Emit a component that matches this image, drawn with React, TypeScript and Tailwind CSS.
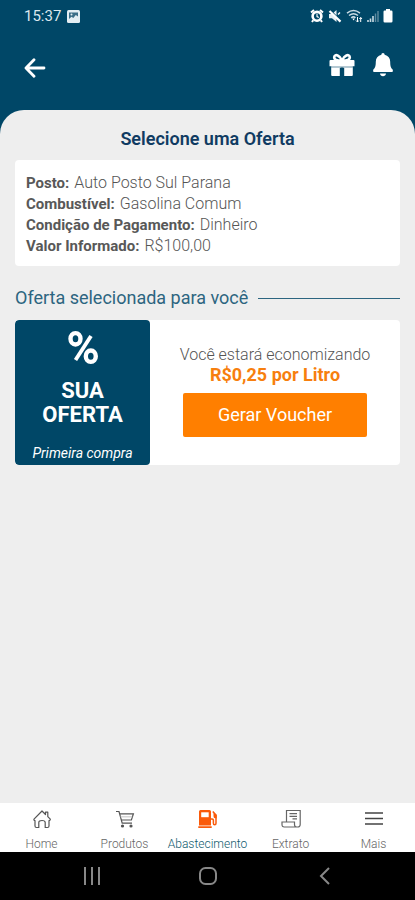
import React from "react";

const details = [
  { label: "Posto", value: "Auto Posto Sul Parana" },
  { label: "Combustível", value: "Gasolina Comum" },
  { label: "Condição de Pagamento", value: "Dinheiro" },
  { label: "Valor Informado", value: "R$100,00" },
];

const PictureIcn = () => (
  <svg width="13" height="13" viewBox="0 0 13 13" aria-hidden="true">
    <rect width="13" height="13" rx="1.5" fill="#e3edf2" />
    <path d="M2 2.5h9v4L8.800 5 6.300 8 4.500 6.800 2 9z" fill="#3b6d86" />
    <circle cx="4.500" cy="4.500" r="1" fill="#e3edf2" />
  </svg>
);

const AlarmIcn = () => (
  <svg width="14" height="14" viewBox="0 0 14 14" fill="none" aria-hidden="true">
    <path d="M1 3.6 4 1M13 3.6 10 1M3.2 11.2 2 13M10.8 11.2 12 13" stroke="#fff" strokeWidth="2" />
    <circle cx="7" cy="7.3" r="4.4" stroke="#fff" strokeWidth="2.6" />
    <path d="M7 4.8v2.8l1.8 1" stroke="#fff" strokeWidth="1.1" />
  </svg>
);

const MuteIcn = () => (
  <svg width="14" height="14" viewBox="0 0 14 14" aria-hidden="true">
    <path d="M1 5h3l4.5-4v12L4 9.300H1z" fill="#e6eff3" />
    <path d="m1 0 12 12" stroke="#004767" strokeWidth="1.500" />
    <path d="m1.500 2 11 10.600" stroke="#fff" strokeWidth="2.200" />
    <path d="M10 5.500 12 3.500" stroke="#fff" strokeWidth="1.200" />
  </svg>
);

const WifiIcn = () => (
  <svg width="17" height="14" viewBox="0 0 17 14" fill="none" aria-hidden="true">
    <path d="M1 4.2Q7.500-1 14 4.200M3 6.500Q7.500 3 12 6.500M5.200 8.800Q7.500 7 9.500 8.800" stroke="#c8dae3" strokeWidth="1.500" />
    <path d="m6.300 9.600 1.200 2 1.500-2z" fill="#fff" />
    <path d="M11.500 13V8m-1.500 3.500 1.500 1.500 1.300-1.500M14.700 13V8.500m-1.300 1.500 1.300-1.500L16 10" stroke="#fff" strokeWidth="1" />
  </svg>
);

const SignalIcn = () => (
  <svg width="12" height="14" viewBox="0 0 12 14" fill="none" aria-hidden="true">
    <path d="M1 13v-2M3.500 13V9.500M6 13V7" stroke="#c8dae3" strokeWidth="1.600" />
    <path d="M8.500 13V4.500M11 13V2" stroke="#5f8ba0" strokeWidth="1.400" />
  </svg>
);

const BatteryIcn = () => (
  <svg width="10" height="14" viewBox="0 0 10 14" fill="#fff" aria-hidden="true">
    <path d="M3 0h4v1.500h1.200q1.300 0 1.300 1.300v9.400q0 1.300-1.300 1.300H1.800Q.5 13.500.5 12.200V2.800q0-1.300 1.300-1.300H3z" />
  </svg>
);

const BackIcn = () => (
  <svg width="22" height="20" viewBox="0 0 22 20" fill="none" stroke="#fff" strokeWidth="2.800" strokeLinecap="round" strokeLinejoin="round" aria-hidden="true">
    <path d="M20 10H2.500M10 1.800 2 10l8 8.200" />
  </svg>
);

const GiftIcn = () => (
  <svg width="26" height="24" viewBox="0 0 26 24" aria-hidden="true">
    <path d="M13 7.500C11 2.500 5.800.2 5.200 4.200 5 7 8 7.500 13 7.500 18 7.500 21 7 20.800 4.200 20.200.2 15 2.500 13 7.500z" fill="none" stroke="#fff" strokeWidth="2.600" />
    <path d="M1.500 7h23q1 0 1 1v5.300H.5V8q0-1 1-1zM2.200 14.800h8.600V23H3.200q-1 0-1-1zM15.200 14.800h8.600V22q0 1-1 1h-7.600z" fill="#fff" />
    <path d="M2.200 13h21.600v2H2.200z" fill="#b4c8d2" />
    <path d="M11.500 14.500h3V23h-3z" fill="#004767" />
  </svg>
);

const BellIcn = () => (
  <svg width="20" height="24" viewBox="0 0 20 24" fill="#fff" aria-hidden="true">
    <path d="M10 0c1 0 1.600.7 1.600 1.800 3.600.9 5.600 3.400 5.600 7 0 4.700.8 6.200 2.200 7.500.7.700.8 2.700-.8 2.700H1.400c-1.600 0-1.500-2-.8-2.700C2 15 2.800 13.500 2.800 8.800c0-3.600 2-6.100 5.600-7C8.400.7 9 0 10 0zM7 20.500h6c-.2 1.700-1.400 2.800-3 2.800s-2.800-1.100-3-2.800z" />
  </svg>
);

const PercentIcn = () => (
  <svg width="32" height="35" viewBox="0 0 32 35" fill="none" stroke="#fff" aria-hidden="true">
    <ellipse cx="8.500" cy="8.800" rx="5" ry="5.700" strokeWidth="4.400" />
    <ellipse cx="23.800" cy="26.200" rx="5" ry="5.700" strokeWidth="4.400" />
    <path d="M24 6 8.500 30" strokeWidth="3.800" />
  </svg>
);

const HomeIcn = () => (
  <svg width="20" height="20" viewBox="0 0 20 20" fill="none" stroke="#555" strokeWidth="1.200" strokeLinejoin="round" aria-hidden="true">
    <path d="M2 10.200 10 2l3.500 3.500V3.200h2.300v4.500L18.300 10.200q.2 1.300-1.300 1.300v5.500q0 1.500-1.500 1.500h-2.300v-5q0-2-3.200-2t-3.200 2v5H4.500Q3 18.500 3 17v-5.500q-1.500 0-1-1.300z" />
  </svg>
);

const CartIcn = () => (
  <svg width="20" height="20" viewBox="0 0 20 20" fill="none" stroke="#555" strokeWidth="1.200" aria-hidden="true">
    <path d="M1 2.500h3l3.200 11.700H17M4.800 4.800h13.600l-2 6.200H6.500" />
    <path d="M5.600 7.800h11.600" stroke="#ccc" />
    <circle cx="7.500" cy="17" r="1" fill="#333" />
    <circle cx="16" cy="17" r="1" fill="#333" />
  </svg>
);

const FuelIcn = () => (
  <svg width="20" height="20" viewBox="0 0 20 20" aria-hidden="true">
    <path d="M2.500 1h9Q13 1 13 2.500v14H1v-14Q1 1 2.500 1zM.3 17.300h13.400V19H.3z" fill="#fa5a0a" />
    <path d="M3.200 3.300h7.500v4.900H3.200z" fill="#fff" />
    <path d="M13 10h1.200q1.200 0 1.200 1.200v3q0 1.500 1.300 1.500T18 14.200V6L14.800 2.500" fill="none" stroke="#fa5a0a" strokeWidth="1.500" />
    <path d="M15.500 4 18.700 6v3.300h-1.500q-1.700 0-1.700-2z" fill="#fa5a0a" />
  </svg>
);

const ReceiptIcn = () => (
  <svg width="20" height="20" viewBox="0 0 20 20" fill="none" stroke="#666" strokeWidth="1.200" aria-hidden="true">
    <path d="M5.500 13V1.500h13.700v14q0 2.500-2.500 2.500H3.200Q1 18 1 15.500V13h12.500v2.500q0 2.500 2.300 2.500M8.500 4.700H16M8.500 7.300H16M11.500 9.800H16" />
  </svg>
);

const MenuIcn = () => (
  <svg width="20" height="20" viewBox="0 0 20 20" fill="none" stroke="#444" strokeWidth="1.600" aria-hidden="true">
    <path d="M1 4h18M1 9.500h18M1 15h18" />
  </svg>
);

const tabs = [
  { label: "Home", icon: <HomeIcn /> },
  { label: "Produtos", icon: <CartIcn /> },
  { label: "Abastecimento", icon: <FuelIcn />, active: true },
  { label: "Extrato", icon: <ReceiptIcn /> },
  { label: "Mais", icon: <MenuIcn /> },
];

function StatusBar() {
  return (
    <div className="flex h-8 items-center justify-between pl-6 pr-[22px]">
      <div className="flex items-center gap-1.5 text-[15px] text-[#dce8ee]">
        <span>15:37</span>
        <PictureIcn />
      </div>
      <div className="flex items-center gap-1">
        <AlarmIcn />
        <MuteIcn />
        <WifiIcn />
        <SignalIcn />
        <BatteryIcn />
      </div>
    </div>
  );
}

function OfferCard() {
  return (
    <section className="flex h-[145px] overflow-hidden rounded bg-white">
      <div className="flex w-[135px] shrink-0 flex-col items-center rounded-sm bg-[#004767] pt-2.5 text-white">
        <PercentIcn />
        <p className="mt-3.5 text-center text-[22px] font-bold leading-6">
          SUA
          <br />
          OFERTA
        </p>
        <p className="mt-4 text-sm italic leading-5">Primeira compra</p>
      </div>
      <div className="flex flex-1 flex-col items-center pt-[25px]">
        <p className="text-base font-light leading-5 text-[#555]">Você estará economizando</p>
        <p className="text-lg font-bold leading-5 text-[#f77f0e]">R$0,25 por Litro</p>
        <button type="button" className="mt-2 h-11 w-[184px] rounded-xs bg-[#ff7f00] text-lg text-white">
          Gerar Voucher
        </button>
      </div>
    </section>
  );
}

export default function App() {
  return (
    <div className="flex min-h-screen flex-col bg-[#004767] font-['Roboto',sans-serif]">
      <StatusBar />
      <header className="flex h-[78px] items-start justify-between pl-6 pr-[22px] pt-[21px]">
        <button type="button" aria-label="Voltar" className="flex h-[30px] items-center">
          <BackIcn />
        </button>
        <div className="flex gap-[18px]">
          <button type="button" aria-label="Presentes" className="flex h-6 items-center">
            <GiftIcn />
          </button>
          <button type="button" aria-label="Notificações" className="flex h-6 items-center">
            <BellIcn />
          </button>
        </div>
      </header>

      <main className="flex-1 rounded-t-3xl bg-[#eee] px-[15px] pt-[17px]">
        <h1 className="text-center text-lg font-semibold leading-6 text-[#103b62]">Selecione uma Oferta</h1>

        <dl className="mt-[9px] rounded bg-white px-[11px] pb-[10px] pt-3">
          {details.map((d) => (
            <div key={d.label} className="flex h-[21px] items-baseline gap-[5px]">
              <dt className="text-[15px] font-bold leading-[21px] text-[#585858]">{d.label}:</dt>
              <dd className="text-base font-light leading-[21px] text-[#555]">{d.value}</dd>
            </div>
          ))}
        </dl>

        <div className="mb-2.5 mt-5 flex items-center gap-2.5">
          <h2 className="text-lg leading-6 text-[#2c6580]">Oferta selecionada para você</h2>
          <span className="h-px flex-1 bg-[#2c6580]" />
        </div>

        <OfferCard />
      </main>

      <nav className="grid grid-cols-5 bg-white pt-1.5">
        {tabs.map((tab) => (
          <a
            key={tab.label}
            href="#"
            className={
              "flex flex-col items-center gap-[7px] text-xs font-light leading-4 " +
              (tab.active ? "text-[#0f5a6e]" : "text-[#666]")
            }
          >
            {tab.icon}
            {tab.label}
          </a>
        ))}
      </nav>

      <div className="grid h-12 grid-cols-[186px_46px_186px] items-center justify-center bg-black">
        <button type="button" aria-label="Recentes" className="flex justify-center">
          <svg width="18" height="18" viewBox="0 0 18 18" stroke="#888" strokeWidth="2">
            <path d="M2 0v18M9 0v18M16 0v18" />
          </svg>
        </button>
        <button type="button" aria-label="Início" className="flex justify-center">
          <svg width="20" height="20" viewBox="0 0 20 20" fill="none" stroke="#888" strokeWidth="2">
            <rect x="2" y="2" width="16" height="16" rx="5.500" />
          </svg>
        </button>
        <button type="button" aria-label="Anterior" className="flex justify-center">
          <svg width="18" height="18" viewBox="0 0 18 18" fill="none" stroke="#888" strokeWidth="2">
            <path d="M14 1 6 9l8 8" />
          </svg>
        </button>
      </div>
    </div>
  );
}
